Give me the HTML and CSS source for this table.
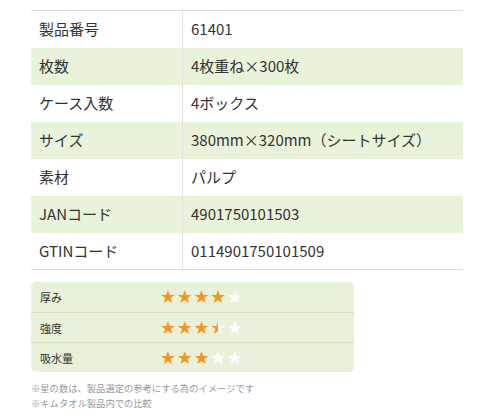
FILE: index.html
```html
<!DOCTYPE html>
<html lang="ja">
<head>
<meta charset="utf-8">
<link rel="stylesheet" href="styles.css">
</head>
<body>
<div class="wrap">
  <table class="spec">
    <tr><th>製品番号</th><td>61401</td></tr>
    <tr class="alt"><th>枚数</th><td>4枚重ね×300枚</td></tr>
    <tr><th>ケース入数</th><td>4ボックス</td></tr>
    <tr class="alt"><th>サイズ</th><td>380mm×320mm（シートサイズ）</td></tr>
    <tr><th>素材</th><td>パルプ</td></tr>
    <tr class="alt"><th>JANコード</th><td>4901750101503</td></tr>
    <tr><th>GTINコード</th><td>0114901750101509</td></tr>
  </table>

  <div class="rating">
    <div class="rrow">
      <span class="rlabel">厚み</span>
      <span class="stars"><span class="on">★</span><span class="on">★</span><span class="on">★</span><span class="on">★</span><span class="off">★</span></span>
    </div>
    <div class="rrow">
      <span class="rlabel">強度</span>
      <span class="stars"><span class="on">★</span><span class="on">★</span><span class="on">★</span><span class="half">★</span><span class="off">★</span></span>
    </div>
    <div class="rrow">
      <span class="rlabel">吸水量</span>
      <span class="stars"><span class="on">★</span><span class="on">★</span><span class="on">★</span><span class="off">★</span><span class="off">★</span></span>
    </div>
  </div>

  <p class="note">※星の数は、製品選定の参考にする為のイメージです<br>※キムタオル製品内での比較</p>
</div>
</body>
</html>
```
FILE: styles.css
```css
html, body {
  margin: 0;
  padding: 0;
  background: #fff;
}
body {
  font-family: "Noto Sans CJK JP", "Noto Sans", sans-serif;
  color: #333;
}
.wrap {
  padding: 10px 0 0 31px;
  width: 432px;
}
.spec {
  width: 432px;
  border-collapse: collapse;
  border-top: 1px solid #dcdcdc;
  border-bottom: 1px solid #dcdcdc;
  font-size: 15px;
}
.spec tr {
  height: 37px;
}
.spec tr.alt {
  background: #e8f3da;
}
.spec th {
  width: 143px;
  text-align: left;
  font-weight: normal;
  padding: 0 0 0 8px;
  border-right: 1px solid #e2e2e2;
  line-height: 20px;
}
.spec td {
  padding: 0 0 0 8px;
  line-height: 20px;
}
.rating {
  margin-top: 12px;
  width: 323px;
  background: #e8f2da;
  border-radius: 5px;
}
.rrow {
  display: flex;
  align-items: center;
  height: 30px;
  border-top: 1px solid #d4e2c2;
  box-sizing: border-box;
}
.rrow:first-child {
  border-top: none;
}
.rlabel {
  width: 121px;
  padding-left: 9px;
  font-size: 11px;
}
.stars {
  display: flex;
  font-size: 18px;
  line-height: 1;
  font-family: "DejaVu Sans", sans-serif;
  margin-left: -1px;
}
.stars span {
  width: 16.7px;
  display: inline-block;
}
.on { color: #f7951e; }
.off { color: #ffffff; }
.half {
  background: linear-gradient(90deg, #f7951e 50%, #ffffff 50%);
  -webkit-background-clip: text;
  background-clip: text;
  color: transparent;
}
.note {
  margin: 9px 0 0;
  font-size: 9.3px;
  line-height: 15px;
  color: #999;
}
```
